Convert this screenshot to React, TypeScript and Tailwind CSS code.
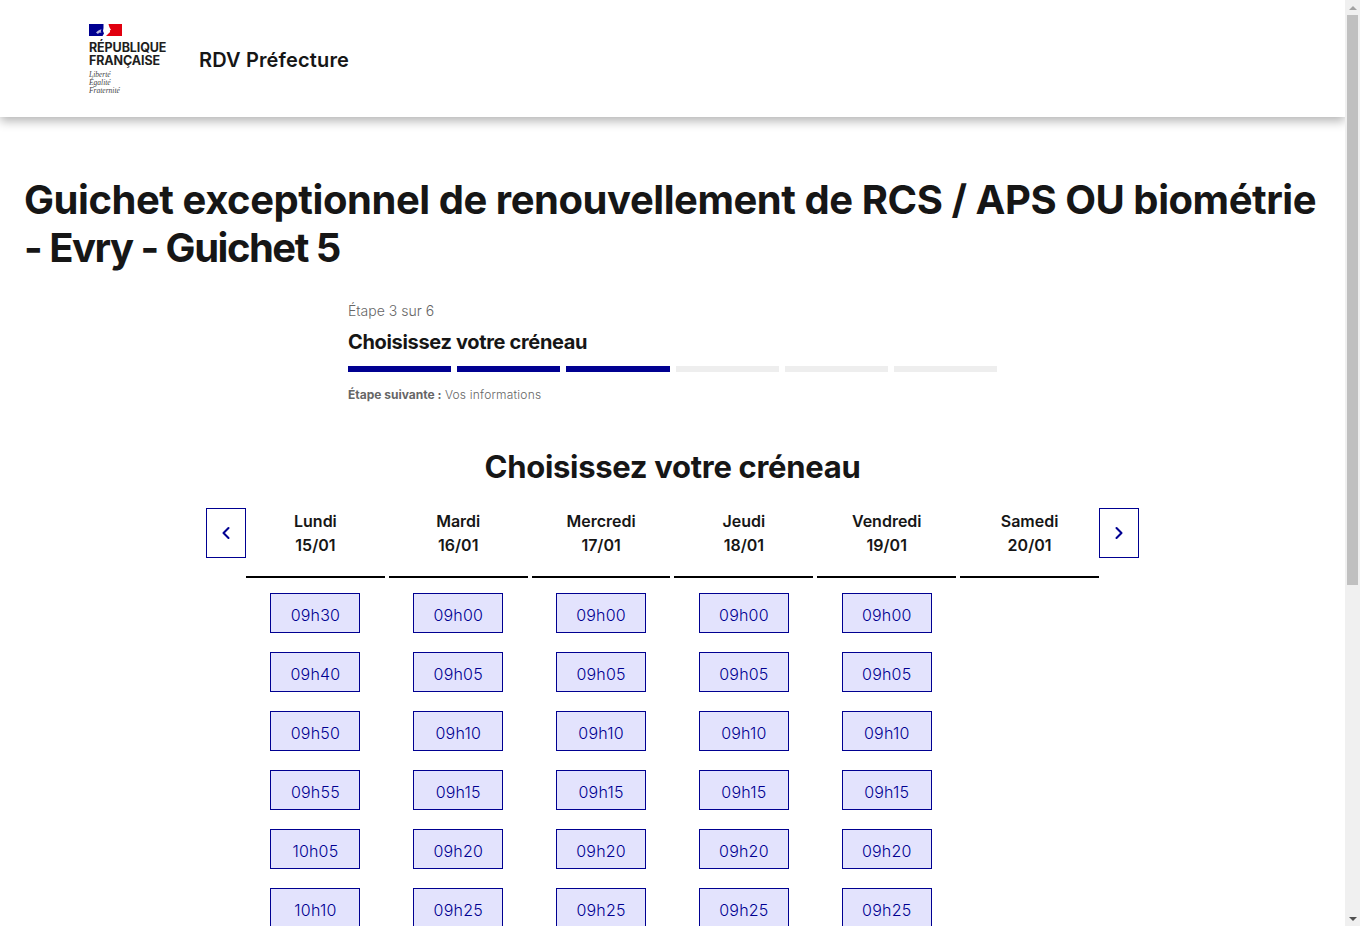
import React from 'react';
import { ChevronLeft, ChevronRight } from 'lucide-react';

const days = [
  { name: 'Lundi', date: '15/01', slots: ['09h30', '09h40', '09h50', '09h55', '10h05', '10h10'] },
  { name: 'Mardi', date: '16/01', slots: ['09h00', '09h05', '09h10', '09h15', '09h20', '09h25'] },
  { name: 'Mercredi', date: '17/01', slots: ['09h00', '09h05', '09h10', '09h15', '09h20', '09h25'] },
  { name: 'Jeudi', date: '18/01', slots: ['09h00', '09h05', '09h10', '09h15', '09h20', '09h25'] },
  { name: 'Vendredi', date: '19/01', slots: ['09h00', '09h05', '09h10', '09h15', '09h20', '09h25'] },
  { name: 'Samedi', date: '20/01', slots: [] as string[] },
];

const steps = [true, true, true, false, false, false];

const Logo: React.FC = () => (
  <div className="w-[78px] shrink-0">
    <svg width="33" height="12" viewBox="0 0 33 12" className="block">
      <rect width="15" height="12" fill="#000091" />
      <rect x="15" width="18" height="12" fill="#e1000f" />
      <path d="M14.500 0h5l.5 2 .8 2 1.200 1.800-1.200.7.300 1.500-1.300 1.200-2.800 2.800h-3.500l1.500-2.500-1-2.500 .5-3z" fill="#ffffff" />
      <path d="M7 8.500l2-1.800 2-1 1.500-.5-.8 2 .8 1.300-2.500.3-1 1.200z" fill="#b9b9e0" />
    </svg>
    <p className="mt-[5px] text-[12.5px] leading-[13px] font-bold tracking-[-0.1px] text-[#1e1e1e]">
      RÉPUBLIQUE
      <br />
      FRANÇAISE
    </p>
    <p className="mt-[4px] font-['Liberation_Serif',serif] italic text-[7.5px] leading-[8px] text-[#444444]">
      Liberté
      <br />
      Égalité
      <br />
      Fraternité
    </p>
  </div>
);

const App: React.FC = () => {
  return (
    <div className="flex h-[926px] overflow-hidden bg-white font-['Inter',sans-serif] text-[#161616]">
      <div className="flex-1 min-w-0">
        <header className="flex items-start h-[117px] pl-[89px] pt-[24px] gap-[32px] bg-white shadow-[0_4px_10px_rgba(0,0,0,0.3)]">
          <Logo />
          <p className="mt-[22px] text-[20px] leading-[28px] font-semibold tracking-[0.15px]">RDV Préfecture</p>
        </header>

        <main className="px-[24px] pt-[59px]">
          <h1 className="text-[40px] leading-[48px] font-bold tracking-[-0.45px]">
            Guichet exceptionnel de renouvellement de RCS / APS OU biométrie{' '}
            <span className="tracking-[-1.5px]">- Evry - Guichet 5</span>
          </h1>

          <div className="w-[649px] ml-[324px] mt-[27px]">
            <p className="text-[14px] leading-[24px] font-light text-[#666666]">Étape 3 sur 6</p>
            <p className="mt-[5px] text-[20px] leading-[28px] font-bold tracking-[-0.33px]">Choisissez votre créneau</p>
            <div className="flex gap-[6px] mt-[10px]">
              {steps.map((done, index) => (
                <div key={index} className={`flex-1 h-[6px] ${done ? 'bg-[#000091]' : 'bg-[#eeeeee]'}`}></div>
              ))}
            </div>
            <p className="mt-[13px] text-[12px] leading-[20px] font-light text-[#666666]">
              <span className="font-bold">Étape suivante :</span> <span className="tracking-[0.2px]">Vos informations</span>
            </p>
          </div>

          <h2 className="mt-[42px] text-center text-[31px] leading-[40px] font-bold tracking-[-0.3px]">Choisissez votre créneau</h2>

          <div className="flex w-[933px] mx-auto mt-[21px] items-start">
            <button className="flex items-center justify-center w-[40px] h-[50px] shrink-0 border border-[#000091] text-[#000091]">
              <ChevronLeft size={20} strokeWidth={2.5} />
            </button>
            <div className="flex-1 grid grid-cols-6 gap-x-[4px]">
              {days.map((day) => (
                <div key={day.name} className="flex flex-col items-center">
                  <div className="w-full h-[70px] border-b-2 border-black text-center text-[16px] leading-[24px] font-semibold pt-[1px]">
                    {day.name}
                    <br />
                    {day.date}
                  </div>
                  <div className="flex flex-col gap-[19px] mt-[15px]">
                    {day.slots.map((slot) => (
                      <button
                        key={slot}
                        className="w-[90px] h-[40px] shrink-0 border border-[#000091] bg-[#e3e3fd] text-[16px] leading-[24px] font-light tracking-[0.2px] text-[#000091] pt-[4px]"
                      >
                        {slot}
                      </button>
                    ))}
                  </div>
                </div>
              ))}
            </div>
            <button className="flex items-center justify-center w-[40px] h-[50px] shrink-0 border border-[#000091] text-[#000091]">
              <ChevronRight size={20} strokeWidth={2.5} />
            </button>
          </div>
        </main>
      </div>

      {/* scrollbar */}
      <div className="flex flex-col items-center w-[15px] shrink-0 bg-[#f0f0f0]">
        <div className="h-[15px] flex items-center justify-center">
          <div className="w-0 h-0 border-x-[4px] border-x-transparent border-b-[4px] border-b-[#a3a3a3]"></div>
        </div>
        <div className="w-[11px] h-[570px] bg-[#c0c0c0]"></div>
        <div className="flex-1"></div>
        <div className="h-[15px] flex items-center justify-center">
          <div className="w-0 h-0 border-x-[4px] border-x-transparent border-t-[4px] border-t-[#505050]"></div>
        </div>
      </div>
    </div>
  );
};

export default App;
